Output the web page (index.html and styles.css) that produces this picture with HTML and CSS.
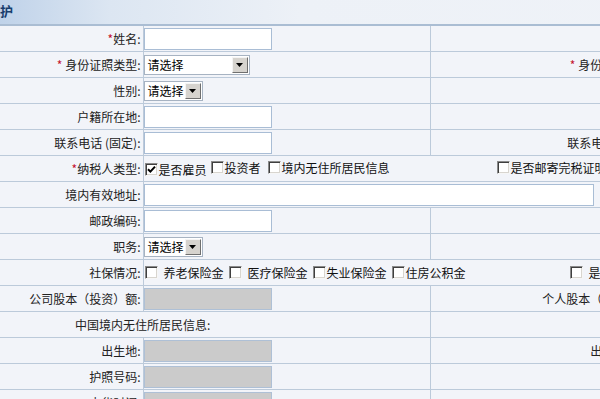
FILE: index.html
```html
<!DOCTYPE html>
<html lang="zh-CN">
<head>
<meta charset="utf-8">
<title>维护</title>
<link rel="stylesheet" href="styles.css">
</head>
<body>
<div class="page">
  <div class="head"><span class="title">护</span></div>
  <table class="form">
    <colgroup>
      <col class="c1"><col class="c2"><col class="c3"><col class="c4">
    </colgroup>
    <tr>
      <td class="lbl"><span class="req">*</span>姓名:</td>
      <td class="fld"><input class="txt" type="text"></td>
      <td class="lbl"></td>
      <td class="fld"></td>
    </tr>
    <tr>
      <td class="lbl"><span class="req">*</span> 身份证照类型:</td>
      <td class="fld">
        <span class="sel sel-lg"><span class="sel-text">请选择</span><span class="sel-btn"><svg width="7" height="4" viewBox="0 0 7 4"><path d="M0 0H7L3.5 4Z" fill="#000"/></svg></span></span>
      </td>
      <td class="lbl"><span class="req">*</span> 身份证照号码:</td>
      <td class="fld"></td>
    </tr>
    <tr>
      <td class="lbl">性别:</td>
      <td class="fld">
        <span class="sel sel-sm"><span class="sel-text">请选择</span><span class="sel-btn"><svg width="7" height="4" viewBox="0 0 7 4"><path d="M0 0H7L3.5 4Z" fill="#000"/></svg></span></span>
      </td>
      <td class="lbl"></td>
      <td class="fld"></td>
    </tr>
    <tr>
      <td class="lbl">户籍所在地:</td>
      <td class="fld"><input class="txt" type="text"></td>
      <td class="lbl"></td>
      <td class="fld"></td>
    </tr>
    <tr>
      <td class="lbl">联系电话 (固定):</td>
      <td class="fld"><input class="txt" type="text"></td>
      <td class="lbl">联系电话 (移动):</td>
      <td class="fld"></td>
    </tr>
    <tr>
      <td class="lbl"><span class="req">*</span>纳税人类型:</td>
      <td class="fld" colspan="3">
        <span class="ck first"><span class="box on"><svg width="9" height="9" viewBox="0 0 9 9"><path d="M1 4.2L3.4 6.6L8 1.6" fill="none" stroke="#000" stroke-width="2"/></svg></span>是否雇员</span><span class="ck m4"><span class="box"></span>投资者</span><span class="ck m7"><span class="box"></span>境内无住所居民信息</span><span class="ck far1"><span class="box"></span>是否邮寄完税证明</span>
      </td>
    </tr>
    <tr>
      <td class="lbl">境内有效地址:</td>
      <td class="fld" colspan="3"><input class="txt txt-wide" type="text"></td>
    </tr>
    <tr>
      <td class="lbl">邮政编码:</td>
      <td class="fld"><input class="txt" type="text"></td>
      <td class="lbl"></td>
      <td class="fld"></td>
    </tr>
    <tr>
      <td class="lbl">职务:</td>
      <td class="fld">
        <span class="sel sel-sm"><span class="sel-text">请选择</span><span class="sel-btn"><svg width="7" height="4" viewBox="0 0 7 4"><path d="M0 0H7L3.5 4Z" fill="#000"/></svg></span></span>
      </td>
      <td class="lbl"></td>
      <td class="fld"></td>
    </tr>
    <tr>
      <td class="lbl">社保情况:</td>
      <td class="fld" colspan="3">
        <span class="ck first"><span class="box"></span><span class="gap">养老保险金</span></span><span class="ck m5"><span class="box"></span><span class="gap">医疗保险金</span></span><span class="ck m5"><span class="box"></span>失业保险金</span><span class="ck m5"><span class="box"></span>住房公积金</span><span class="ck far2"><span class="box"></span><span class="gap">是否</span></span>
      </td>
    </tr>
    <tr>
      <td class="lbl">公司股本（投资）额:</td>
      <td class="fld"><input class="txt off" type="text" disabled></td>
      <td class="lbl">个人股本（投资）额:</td>
      <td class="fld"></td>
    </tr>
    <tr>
      <td class="sect" colspan="2">中国境内无住所居民信息:</td>
      <td class="lbl"></td>
      <td class="fld"></td>
    </tr>
    <tr>
      <td class="lbl">出生地:</td>
      <td class="fld"><input class="txt off" type="text" disabled></td>
      <td class="lbl">出入境日期:</td>
      <td class="fld"></td>
    </tr>
    <tr>
      <td class="lbl">护照号码:</td>
      <td class="fld"><input class="txt off" type="text" disabled></td>
      <td class="lbl"></td>
      <td class="fld"></td>
    </tr>
    <tr>
      <td class="lbl">来华时间:</td>
      <td class="fld"><input class="txt off" type="text" disabled></td>
      <td class="lbl"></td>
      <td class="fld"></td>
    </tr>
  </table>
</div>
</body>
</html>
```
FILE: styles.css
```css
html, body {
  margin: 0;
  padding: 0;
}
body {
  background: #f2f4f9;
  font-family: "Noto Sans CJK SC", "Noto Sans", sans-serif;
  font-size: 12px;
  color: #222;
  overflow: hidden;
}
.page {
  width: 900px;
}
.head {
  height: 24px;
  border-bottom: 2px solid #aabdd3;
  background: linear-gradient(to right, #bfd2e9 0, #dce6f2 110px, #edf1f7 300px, #f0f3f8 100%);
}
.title {
  display: inline-block;
  margin-left: 0;
  line-height: 22px;
  font-size: 13px;
  font-weight: bold;
  color: #183d6d;
}
.form {
  border-collapse: collapse;
  table-layout: fixed;
  width: 900px;
}
.c1 { width: 143px; }
.c2 { width: 287px; }
.c3 { width: 226px; }
.c4 { width: 244px; }
.form td {
  height: 25px;
  padding: 0;
  border-bottom: 1px solid #bccada;
  border-right: 1px solid #bccada;
  vertical-align: middle;
  white-space: nowrap;
  overflow: hidden;
}
.lbl {
  text-align: right;
  padding-right: 2px !important;
}
.sect {
  text-align: left;
  padding-left: 75px !important;
}
.req {
  color: #c4122f;
}
.fld {
  text-align: left;
}
.txt {
  display: block;
  box-sizing: border-box;
  width: 128px;
  height: 22px;
  margin: 0;
  padding: 0 2px;
  border: 1px solid #a9bdd5;
  background: #fff;
  font: inherit;
  outline: none;
}
.txt-wide {
  width: 450px;
}
.txt.off {
  background: #cbcbcb;
  border-color: #aec0d6;
}
.sel {
  display: flex;
  align-items: center;
  box-sizing: border-box;
  height: 20px;
  border: 1px solid #a7b3c2;
  background: #fff;
}
.sel-lg { width: 106px; }
.sel-sm { width: 59px; }
.sel-text {
  flex: 1;
  padding-left: 3px;
  font-size: 12px;
  color: #000;
}
.sel-btn {
  display: flex;
  align-items: center;
  justify-content: center;
  box-sizing: border-box;
  width: 16px;
  height: 16px;
  margin-right: 1px;
  background: #d6d3ce;
  border: 1px solid;
  border-color: #f4f4f4 #6f6f6f #6f6f6f #f4f4f4;
}
.ck {
  display: inline-flex;
  align-items: center;
  margin-left: 6px;
  color: #111;
}
.ck.first { margin-left: 1px; }
.ck.m4 { margin-left: 4px; }
.ck.m5 { margin-left: 5px; }
.ck.m7 { margin-left: 7px; }
.ck.far1 { margin-left: 107px; }
.ck.far2 { margin-left: 104px; }
.gap { padding-left: 5px; }
.box {
  display: inline-flex;
  align-items: center;
  justify-content: center;
  box-sizing: border-box;
  width: 13px;
  height: 13px;
  margin-right: 1px;
  background: #fff;
  border: 1px solid;
  border-color: #8a8a8a #f6f6f6 #f6f6f6 #8a8a8a;
  box-shadow: inset 1px 1px 0 #3f3f3f, inset -1px -1px 0 #d8d5cf;
}
```
